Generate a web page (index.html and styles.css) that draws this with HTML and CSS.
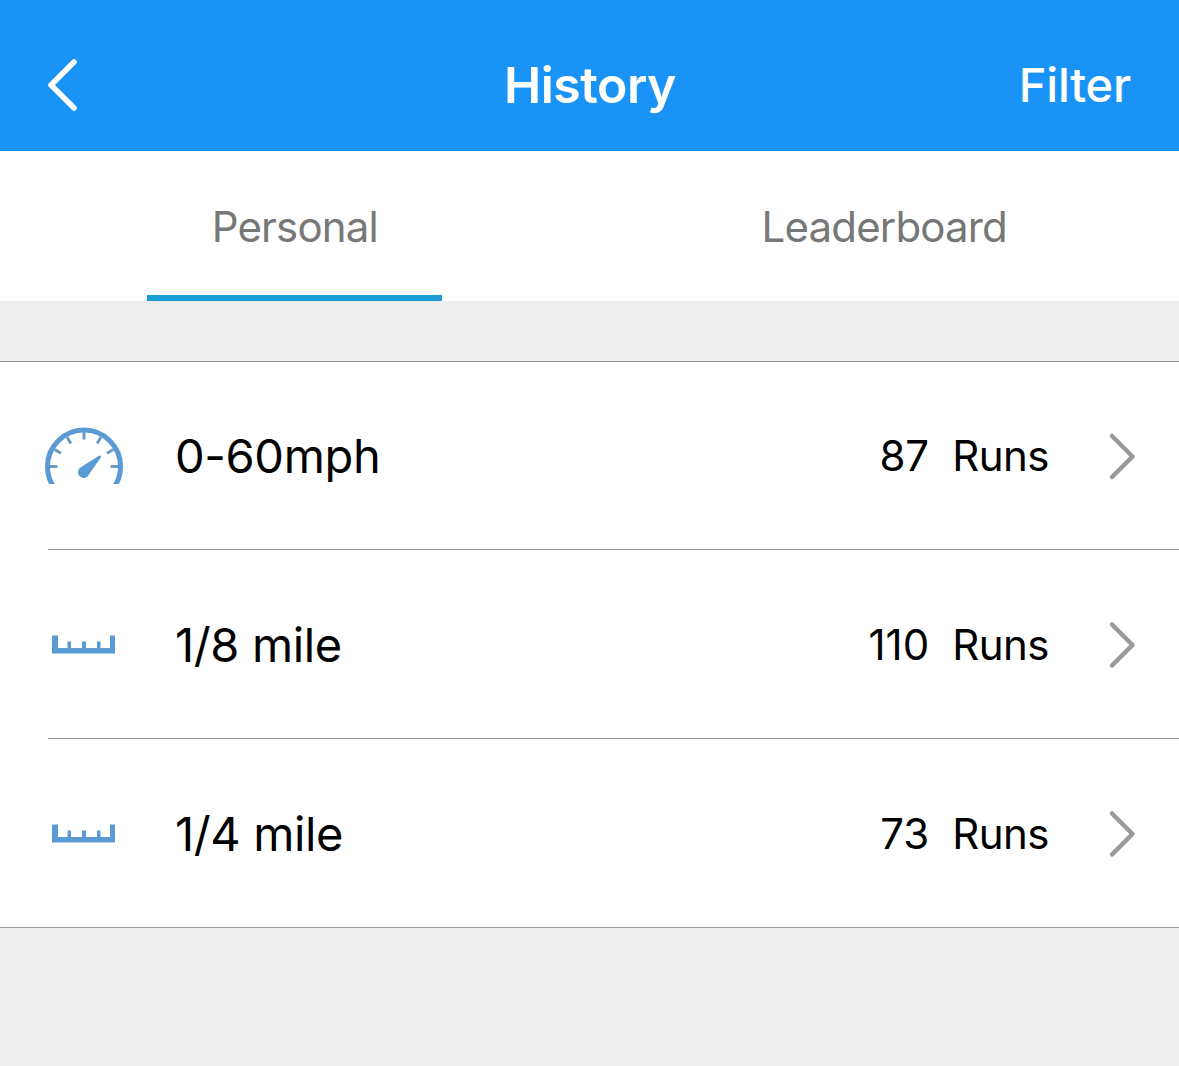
FILE: index.html
```
<!DOCTYPE html>
<html lang="en">
<head>
    <meta charset="UTF-8">
    <meta name="viewport" content="width=device-width, initial-scale=1.0">
    <title>History</title>
    <link rel="stylesheet" href="styles.css">
</head>
<body>
    <header class="navbar">
        <a class="back" href="#" aria-label="Back">
            <svg width="36" height="56" viewBox="0 0 36 56">
                <path d="M30 5 L7 28 L30 51"/>
            </svg>
        </a>
        <h1>History</h1>
        <a class="filter" href="#">Filter</a>
    </header>

    <nav class="tabs">
        <a class="tab active" href="#"><span>Personal</span></a>
        <a class="tab" href="#"><span>Leaderboard</span></a>
    </nav>

    <ul class="run-list">
        <li class="run">
            <!-- the bottom of the dial is cut off by the viewBox -->
            <svg class="icon gauge" width="84" height="60" viewBox="0 0 84 60">
                <circle class="gauge-arc" cx="42" cy="42.5" r="36.5"/>
                <g class="gauge-ticks">
                    <path d="M42 8 V15.5"/>
                    <path d="M8 42.5 H15.5"/>
                    <path d="M76 42.5 H68.5"/>
                    <path d="M12.6 25.5 L19 29.3"/>
                    <path d="M71.4 25.5 L65 29.3"/>
                    <path d="M25 13.1 L28.8 19.5"/>
                    <path d="M59 13.1 L55.2 19.5"/>
                </g>
                <path class="fill" d="M57 31.8 L38.4 43.5 A5.7 5.7 0 1 0 46.9 50.4 L58.8 33.6 A1.3 1.3 0 0 0 57 31.8 Z"/>
            </svg>
            <span class="name">0-60mph</span>
            <span class="count">87</span>
            <span class="unit">Runs</span>
            <svg class="chevron" width="30" height="50" viewBox="0 0 30 50">
                <path d="M5 5 L25.5 25.5 L5 46"/>
            </svg>
        </li>
        <li class="run">
            <svg class="icon" width="84" height="63" viewBox="0 0 84 63">
                <path class="fill" d="M10 22.5 H16 V35 H25.5 V28.5 H29 V35 H40 V28.5 H44 V35 H55 V28.5 H58.5 V35 H68 V22.5 H73 V40.5 H10 Z"/>
            </svg>
            <span class="name">1/8 mile</span>
            <span class="count">110</span>
            <span class="unit">Runs</span>
            <svg class="chevron" width="30" height="50" viewBox="0 0 30 50">
                <path d="M5 5.5 L25.5 26 L5 46.5"/>
            </svg>
        </li>
        <li class="run">
            <svg class="icon" width="84" height="63" viewBox="0 0 84 63">
                <path class="fill" d="M10 22.5 H16 V35 H25.5 V28.5 H29 V35 H40 V28.5 H44 V35 H55 V28.5 H58.5 V35 H68 V22.5 H73 V40.5 H10 Z"/>
            </svg>
            <span class="name">1/4 mile</span>
            <span class="count">73</span>
            <span class="unit">Runs</span>
            <svg class="chevron" width="30" height="50" viewBox="0 0 30 50">
                <path d="M5 5.5 L25.5 26 L5 46.5"/>
            </svg>
        </li>
    </ul>
</body>
</html>
```
FILE: styles.css
```
* {
    box-sizing: border-box;
}

body {
    margin: 0;
    background-color: #eeeeee;
    font-family: Inter, "Liberation Sans", sans-serif;
    color: #000;
}

a {
    color: inherit;
    text-decoration: none;
}

svg {
    display: block;
    fill: none;
}

/* Top bar */
.navbar {
    display: grid;
    grid-template-columns: 1fr auto 1fr;
    align-items: center;
    height: 151px;
    padding: 19px 48px 0 44px;
    background-color: #1994f6;
    color: #fff;
}

.navbar h1 {
    margin: 0;
    padding-left: 5px;
    font-size: 50px;
    font-weight: 600;
    letter-spacing: -0.5px;
}

.back path {
    stroke: #fff;
    stroke-width: 5.5;
    stroke-linecap: round;
    stroke-linejoin: round;
}

.filter {
    justify-self: end;
    padding-bottom: 2px;
    font-size: 47px;
    font-weight: 500;
    letter-spacing: -0.2px;
}

/* Tabs */
.tabs {
    display: grid;
    grid-template-columns: 1fr 1fr;
    height: 150px;
    background-color: #fff;
}

.tab {
    display: flex;
    flex-direction: column;
    align-items: center;
    color: #777;
    font-size: 42px;
    letter-spacing: -0.85px;
}

.tab span {
    display: flex;
    align-items: center;
    height: 144px;
    padding-top: 6px;
}

.tab.active::after {
    content: "";
    width: 50%;
    height: 6px;
    background-color: #1d9dd9;
}

/* Runs */
.run-list {
    display: grid;
    grid-template-rows: 188px 189px 188px;
    margin: 60px 0 0;
    padding: 0 0 0 48px;
    border-top: 1px solid #999;
    border-bottom: 1px solid #999;
    background-color: #fff;
    list-style: none;
}

.run {
    display: flex;
    align-items: center;
    padding-right: 42px;
    border-bottom: 1px solid #999;
}

.run:last-child {
    border-bottom: none;
}

.icon {
    margin: 0 49px 0 -6px;
}

.gauge {
    margin-bottom: 4px;
}

.name {
    flex: 1;
    font-size: 47px;
    letter-spacing: -0.35px;
}

.count,
.unit {
    font-size: 42px;
}

.unit {
    margin: 0 58px 0 23px;
    letter-spacing: -0.5px;
}

.fill {
    fill: #5b9bd5;
}

.gauge-arc {
    stroke: #5b9bd5;
    stroke-width: 5;
}

.gauge-ticks {
    stroke: #6f9cc0;
    stroke-width: 3;
}

.chevron path {
    stroke: #999;
    stroke-width: 4.5;
    stroke-linecap: round;
    stroke-linejoin: round;
}
```
